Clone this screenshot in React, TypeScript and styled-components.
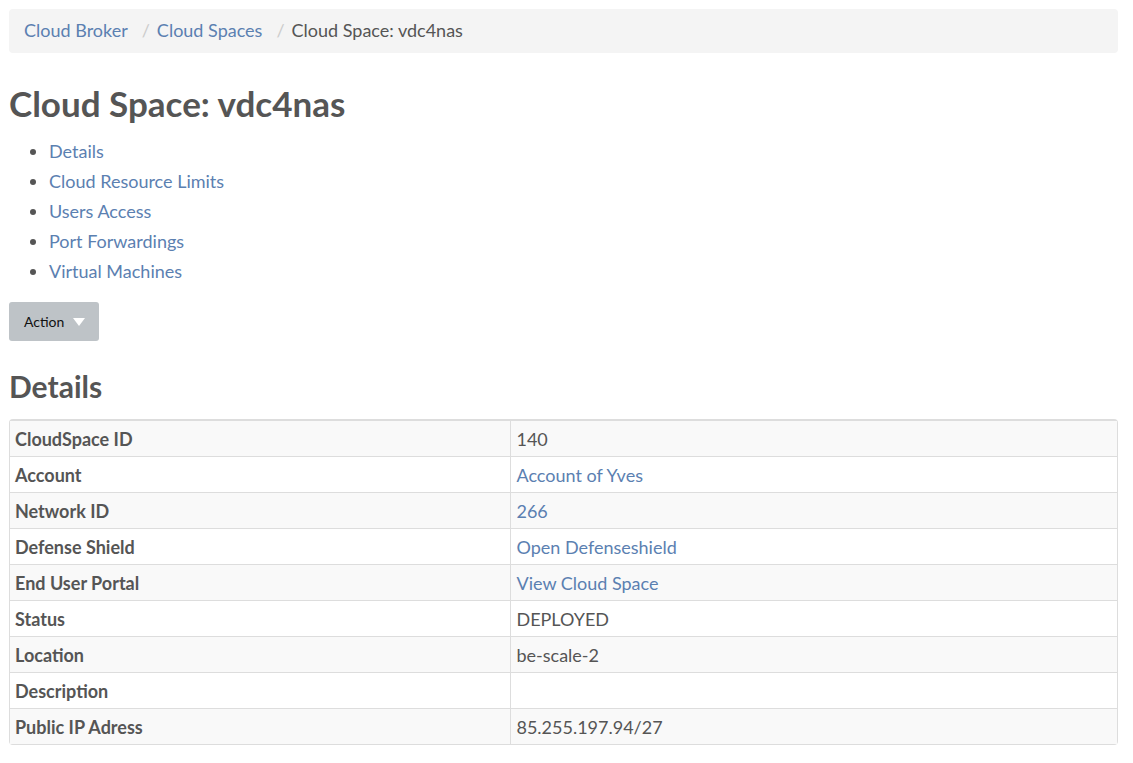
import styled, { createGlobalStyle } from 'styled-components';

const GlobalStyle = createGlobalStyle`
  body {
    margin: 0;
    background: #fff;
    font-family: Lato, "Open Sans", sans-serif;
    color: #555;
  }
`;

const Styled = {
  Page: styled.div`
    padding: 9px 15px 20px 9px;
  `,

  Breadcrumb: styled.nav`
    display: flex;
    align-items: center;
    height: 44px;
    padding: 0 15px 2px;
    box-sizing: border-box;
    background-color: #f4f4f4;
    border-radius: 4px;
    font-size: 18px;
  `,

  Crumb: styled.a`
    color: #5b80b1;
    text-decoration: none;
  `,

  Current: styled.span`
    color: #555;
  `,

  Separator: styled.span`
    color: #ccc;
    padding: 0 7px 0 14px;
  `,

  Title: styled.h1`
    margin: 28px 0 0;
    font-size: 35px;
    font-weight: 700;
    line-height: 44px;
    color: #555;
  `,

  Nav: styled.ul`
    margin: 11px 0 0;
    padding-left: 40px;
    font-size: 18px;
    line-height: 30px;

    li::marker {
      color: #555;
    }
  `,

  NavLink: styled.a`
    color: #5b80b1;
    text-decoration: none;
  `,

  ActionButton: styled.button`
    display: flex;
    align-items: center;
    gap: 9px;
    margin-top: 16px;
    height: 39px;
    padding: 0 14px 0 15px;
    border: none;
    border-radius: 3px;
    background-color: #bec3c7;
    color: #111;
    font-family: Lato, sans-serif;
    font-size: 14px;
    cursor: pointer;
  `,

  Caret: styled.span`
    width: 0;
    height: 0;
    border-left: 6px solid transparent;
    border-right: 6px solid transparent;
    border-top: 8px solid #fff;
  `,

  Heading: styled.h2`
    margin: 28px 0 0;
    font-size: 30px;
    font-weight: 700;
    line-height: 34px;
    color: #555;
  `,

  Table: styled.table`
    margin-top: 16px;
    width: 100%;
    border-collapse: separate;
    border-spacing: 0;
    border: 1px solid #ddd;
    border-top: 2px solid #ddd;
    border-radius: 4px;
    font-size: 18px;
  `,

  Row: styled.tr`
    &:nth-child(odd) td {
      background-color: #f9f9f9;
    }

    &:not(:first-child) td {
      border-top: 1px solid #ddd;
    }
  `,

  Label: styled.td`
    width: 45.3%;
    height: 35px;
    padding: 0 5px;
    font-weight: 700;
    color: #555;
    border-right: 1px solid #ddd;
  `,

  Value: styled.td`
    height: 35px;
    padding: 0 5px;
    color: #555;
  `,

  ValueLink: styled.a`
    color: #5b80b1;
    text-decoration: none;
  `,
};

const sections = ['Details', 'Cloud Resource Limits', 'Users Access', 'Port Forwardings', 'Virtual Machines'];

const details: { label: string; value: string; link?: boolean }[] = [
  { label: 'CloudSpace ID', value: '140' },
  { label: 'Account', value: 'Account of Yves', link: true },
  { label: 'Network ID', value: '266', link: true },
  { label: 'Defense Shield', value: 'Open Defenseshield', link: true },
  { label: 'End User Portal', value: 'View Cloud Space', link: true },
  { label: 'Status', value: 'DEPLOYED' },
  { label: 'Location', value: 'be-scale-2' },
  { label: 'Description', value: '' },
  { label: 'Public IP Adress', value: '85.255.197.94/27' },
];

export default function App() {
  return (
    <Styled.Page>
      <GlobalStyle />
      <Styled.Breadcrumb>
        <Styled.Crumb href="#">Cloud Broker</Styled.Crumb>
        <Styled.Separator>/</Styled.Separator>
        <Styled.Crumb href="#">Cloud Spaces</Styled.Crumb>
        <Styled.Separator>/</Styled.Separator>
        <Styled.Current>Cloud Space: vdc4nas</Styled.Current>
      </Styled.Breadcrumb>

      <Styled.Title>Cloud Space: vdc4nas</Styled.Title>

      <Styled.Nav>
        {sections.map((s) => (
          <li key={s}>
            <Styled.NavLink href="#">{s}</Styled.NavLink>
          </li>
        ))}
      </Styled.Nav>

      <Styled.ActionButton>
        Action
        <Styled.Caret />
      </Styled.ActionButton>

      <Styled.Heading>Details</Styled.Heading>

      <Styled.Table>
        <tbody>
          {details.map(({ label, value, link }) => (
            <Styled.Row key={label}>
              <Styled.Label>{label}</Styled.Label>
              <Styled.Value>
                {link ? <Styled.ValueLink href="#">{value}</Styled.ValueLink> : value}
              </Styled.Value>
            </Styled.Row>
          ))}
        </tbody>
      </Styled.Table>
    </Styled.Page>
  );
}
